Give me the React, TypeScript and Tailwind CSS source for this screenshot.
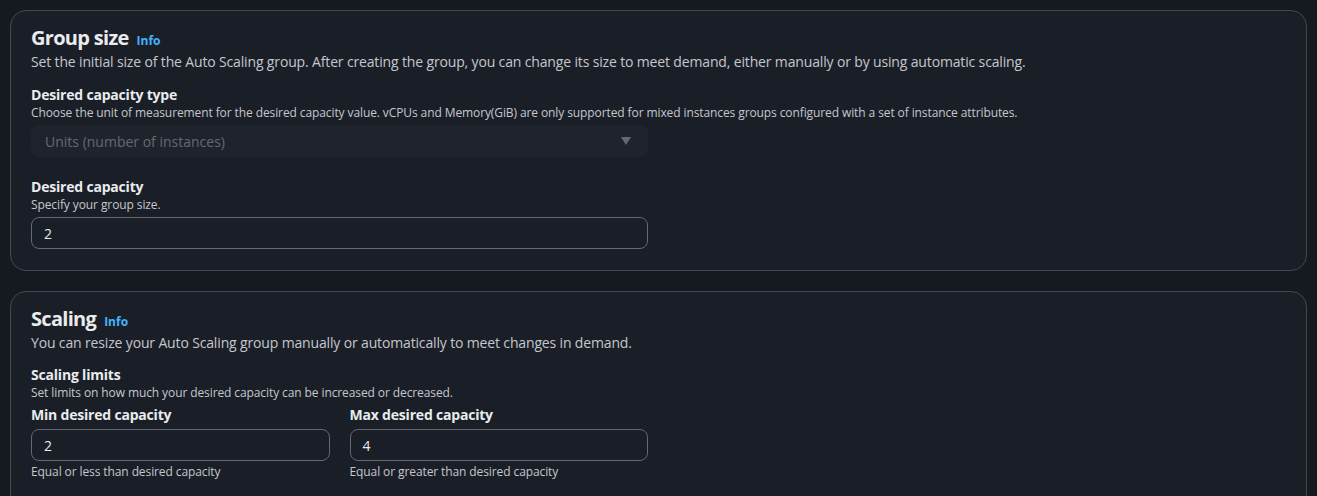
import React from "react";

const font = { fontFamily: '"Open Sans", "Noto Sans", sans-serif' };

function Label({ title, desc }: { title: string; desc?: string }) {
  return (
    <div>
      <div className="text-[14px] font-bold leading-[20px] tracking-[-0.2px] text-[#e9ebed]">{title}</div>
      {desc && <div className="text-[12px] leading-[16px] tracking-[-0.1px] text-[#c6c6cd]">{desc}</div>}
    </div>
  );
}

function Input({ value }: { value: string }) {
  return (
    <div className="flex h-[32px] items-center rounded-[8px] border border-[#656871] bg-[#1a1f27] px-[12px] text-[14px] text-[#e9ebed]">
      {value}
    </div>
  );
}

function Title({ text }: { text: string }) {
  return (
    <div className="flex items-baseline gap-[8px]">
      <h2 className="text-[20px] font-bold leading-[28px] tracking-[-0.7px] text-[#e9ebed]">{text}</h2>
      <span className="text-[12px] font-bold text-[#42b4ff]">Info</span>
    </div>
  );
}

export default function App() {
  return (
    <div className="h-[496px] overflow-hidden bg-[#151a21] p-[10px]" style={font}>
      <div className="flex flex-col gap-[20px]">
        <section className="rounded-[16px] border border-[#434850] bg-[#1a1f27] px-[20px] pb-[21px] pt-[13px]">
          <Title text="Group size" />
          <p className="text-[14px] leading-[20px] tracking-[-0.15px] text-[#c6c6cd]">
            Set the initial size of the Auto Scaling group. After creating the group, you can change its size to meet demand, either manually or by using automatic scaling.
          </p>
          <div className="mt-[13px]">
            <Label
              title="Desired capacity type"
              desc="Choose the unit of measurement for the desired capacity value. vCPUs and Memory(GiB) are only supported for mixed instances groups configured with a set of instance attributes."
            />
            <div className="mt-[4px] flex h-[32px] w-[617px] items-center justify-between rounded-[8px] bg-[#1f242c] pl-[14px] pr-[16px] text-[14px] text-[#656871]">
              <span>Units (number of instances)</span>
              <svg width="12" height="10" viewBox="0 0 12 10">
                <path d="M1 1 L11 1 L6 9 Z" fill="#656871" />
              </svg>
            </div>
          </div>
          <div className="mt-[20px] w-[617px]">
            <Label title="Desired capacity" desc="Specify your group size." />
            <div className="mt-[4px]">
              <Input value="2" />
            </div>
          </div>
        </section>

        <section className="rounded-[16px] border border-[#434850] bg-[#1a1f27] px-[20px] pb-[40px] pt-[13px]">
          <Title text="Scaling" />
          <p className="text-[14px] leading-[20px] tracking-[-0.15px] text-[#c6c6cd]">
            You can resize your Auto Scaling group manually or automatically to meet changes in demand.
          </p>
          <div className="mt-[12px]">
            <Label title="Scaling limits" desc="Set limits on how much your desired capacity can be increased or decreased." />
          </div>
          <div className="mt-[4px] grid w-[617px] grid-cols-2 gap-[20px]">
            <div>
              <div className="text-[14px] font-bold leading-[20px] tracking-[-0.2px] text-[#e9ebed]">Min desired capacity</div>
              <div className="mt-[4px]">
                <Input value="2" />
              </div>
              <div className="mt-[3px] text-[12px] leading-[16px] tracking-[-0.1px] text-[#c6c6cd]">Equal or less than desired capacity</div>
            </div>
            <div>
              <div className="text-[14px] font-bold leading-[20px] tracking-[-0.2px] text-[#e9ebed]">Max desired capacity</div>
              <div className="mt-[4px]">
                <Input value="4" />
              </div>
              <div className="mt-[3px] text-[12px] leading-[16px] tracking-[-0.1px] text-[#c6c6cd]">Equal or greater than desired capacity</div>
            </div>
          </div>
        </section>
      </div>
    </div>
  );
}
